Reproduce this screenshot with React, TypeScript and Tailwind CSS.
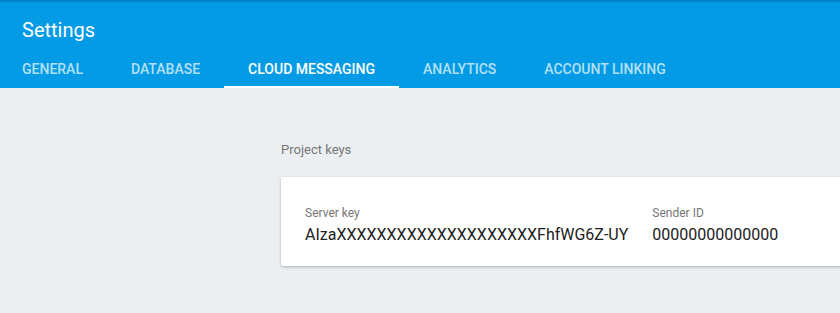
import React from "react";

const tabs = ["GENERAL", "DATABASE", "CLOUD MESSAGING", "ANALYTICS", "ACCOUNT LINKING"];

export default function App() {
  return (
    <div className="w-[840px] h-[313px] overflow-hidden bg-[#ECEFF1] font-['Roboto',sans-serif]">
      <header className="relative bg-[#039BE5] h-[88px] flex flex-col">
        <div className="absolute top-0 left-0 right-0 h-[3px] bg-gradient-to-b from-[#0277BD] to-[#039BE5]" />
        <div className="h-[49px] pt-4 pl-[22px]">
          <h1 className="text-[20px] leading-[28px] text-white font-normal">Settings</h1>
        </div>
        <nav className="h-[39px] flex ml-[-2px]">
          {tabs.map((t) => {
            const active = t === "CLOUD MESSAGING";
            return (
              <div
                key={t}
                className={
                  "relative px-6 pt-[2px] flex items-center text-[14px] font-medium tracking-normal " +
                  (active ? "text-white" : "text-[#B3E0F7]")
                }
              >
                {t}
                {active && <div className="absolute left-0 right-0 bottom-0 h-[2px] bg-white" />}
              </div>
            );
          })}
        </nav>
      </header>
      <main className="pl-[281px] pt-[52px]">
        <div className="text-[13px] leading-[20px] text-[#757575]">Project keys</div>
        <div className="mt-[17px] w-[700px] bg-white rounded-[2px] shadow-[0_1px_3px_rgba(0,0,0,0.28)] pl-6 pt-[28px] pb-[19px] flex gap-6">
          <div>
            <div className="text-[12px] leading-[16px] text-[#757575]">Server key</div>
            <div className="mt-[2px] text-[16px] leading-[24px] text-[#212121]">
              AIzaXXXXXXXXXXXXXXXXXXXXFhfWG6Z-UY
            </div>
          </div>
          <div>
            <div className="text-[12px] leading-[16px] text-[#757575]">Sender ID</div>
            <div className="mt-[2px] text-[16px] leading-[24px] text-[#212121]">00000000000000</div>
          </div>
        </div>
      </main>
    </div>
  );
}
